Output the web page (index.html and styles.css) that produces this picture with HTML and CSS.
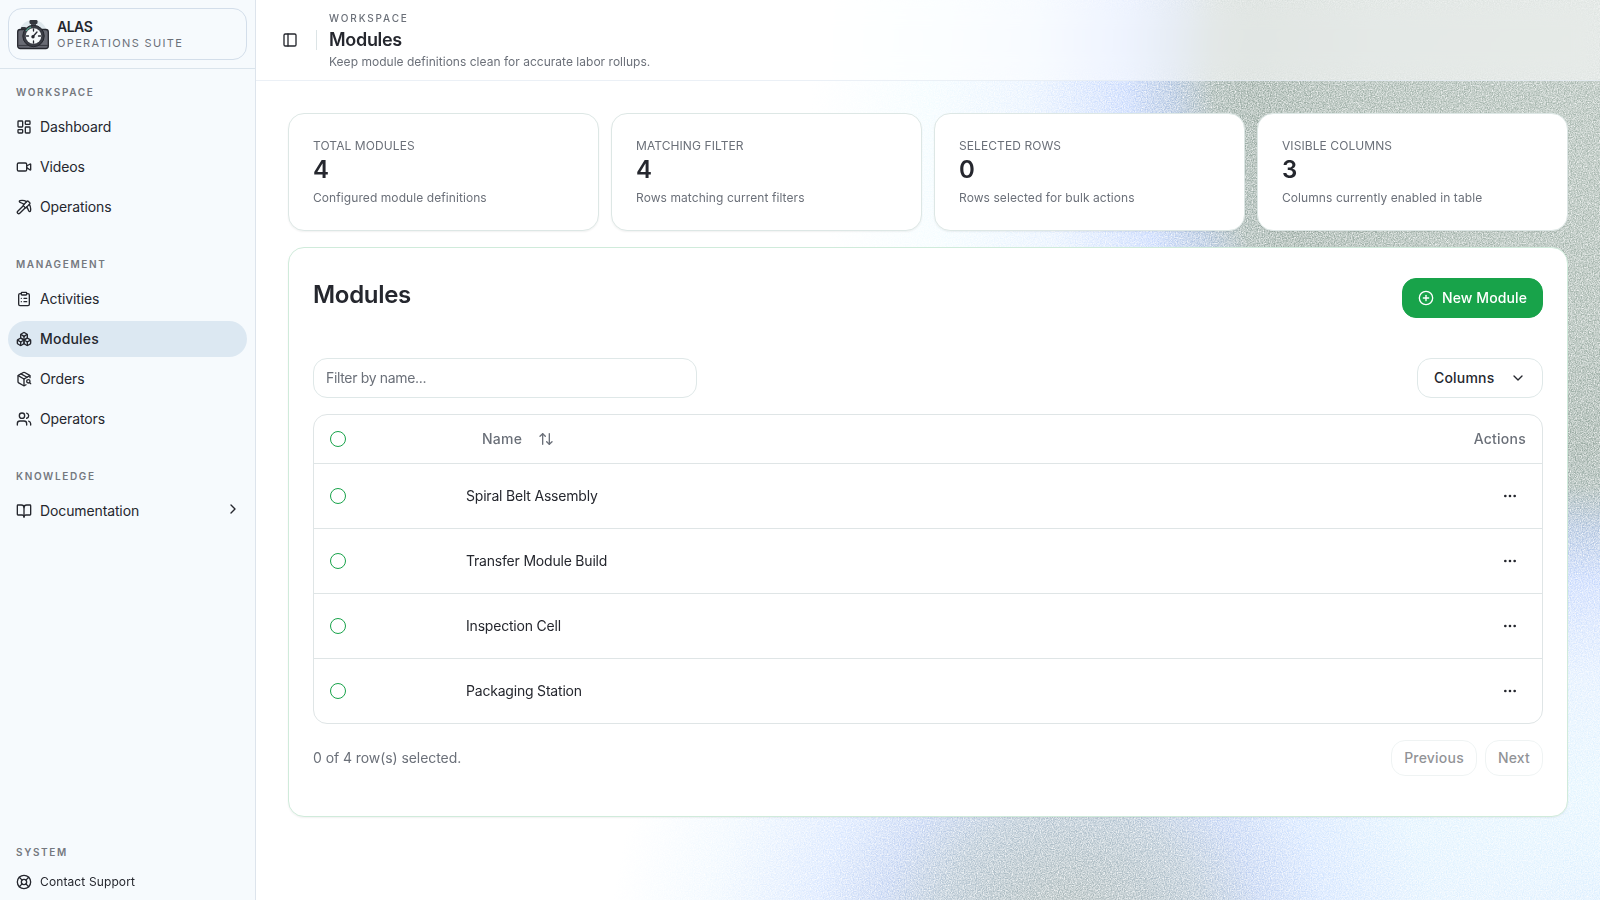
FILE: index.html
```html
<!DOCTYPE html>
<html lang="en">
<head>
    <meta charset="UTF-8">
    <meta name="viewport" content="width=device-width, initial-scale=1.0">
    <title>Modules</title>
    <link rel="stylesheet" href="styles.css">
</head>
<body>
    <div class="backdrop">
        <svg class="grain" width="1344" height="900">
            <filter id="grain" x="0" y="0" width="100%" height="100%" color-interpolation-filters="sRGB">
                <feTurbulence type="fractalNoise" baseFrequency="0.83" numOctaves="3" seed="4"/>
                <feColorMatrix type="matrix" values="0 0 0 0 1  0 0 0 0 1  0 0 0 0 1  1.5 0 0 0 -0.38"/>
            </filter>
            <rect width="1344" height="900" filter="url(#grain)"/>
        </svg>
    </div>

    <div class="app">
        <aside class="sidebar">
            <div class="sidebar-header">
                <div class="brand">
                    <svg class="brand-logo" width="32" height="32" viewBox="0 0 32 32">
                        <circle cx="16" cy="15" r="14" fill="#dfe8ed"/>
                        <rect x="4" y="8" width="5" height="4" rx="1" fill="#34363d"/>
                        <rect x="0.7" y="10.5" width="30.6" height="19" rx="2.5" fill="#696b74" stroke="#25272e" stroke-width="1.3"/>
                        <path d="M1 26.5h30" stroke="#3c3e46" stroke-width="1.2"/>
                        <rect x="14" y="4" width="5" height="4" fill="#4a4c54"/>
                        <rect x="12.5" y="1" width="8" height="4" rx="1.2" fill="#34363d"/>
                        <circle cx="16.5" cy="17" r="10.7" fill="#3a3c44" stroke="#25272e" stroke-width="1"/>
                        <circle cx="16.5" cy="17" r="7.8" fill="#f6f9fa"/>
                        <path d="M9 12a9.3 9.3 0 0 1 5-4" fill="none" stroke="#4fa58d" stroke-width="1.2"/>
                        <path d="M16.5 10v2M16.5 22v2M9.5 17h2M21.5 17h2M16 17.5l4-4.5" stroke="#25272e" stroke-width="1.3" stroke-linecap="round"/>
                        <circle cx="16" cy="17.7" r="1.7" fill="#25272e"/>
                    </svg>
                    <div>
                        <div class="brand-name">ALAS</div>
                        <div class="brand-sub">OPERATIONS SUITE</div>
                    </div>
                </div>
            </div>

            <nav class="nav">
                <div class="nav-group">
                    <div class="nav-label">WORKSPACE</div>
                    <a class="nav-item">
                        <svg class="icon" viewBox="0 0 24 24"><rect width="7" height="9" x="3" y="3" rx="1"/><rect width="7" height="5" x="14" y="3" rx="1"/><rect width="7" height="9" x="14" y="12" rx="1"/><rect width="7" height="5" x="3" y="16" rx="1"/></svg>
                        <span>Dashboard</span>
                    </a>
                    <a class="nav-item">
                        <svg class="icon" viewBox="0 0 24 24"><path d="m16 13 5.223 3.482a.5.5 0 0 0 .777-.416V7.87a.5.5 0 0 0-.752-.432L16 10.5"/><rect x="2" y="6" width="14" height="12" rx="2"/></svg>
                        <span>Videos</span>
                    </a>
                    <a class="nav-item">
                        <svg class="icon" viewBox="0 0 24 24"><path d="m14 13-8.381 8.38a1 1 0 0 1-3.001-3L11 9.999"/><path d="M15.973 4.027A13 13 0 0 0 5.902 2.373c-1.398.342-1.092 2.158.277 2.601a19.9 19.9 0 0 1 5.822 3.024"/><path d="M16.001 11.999a19.9 19.9 0 0 1 3.024 5.824c.444 1.369 2.26 1.676 2.603.278A13 13 0 0 0 20 8.069"/><path d="M18.352 3.352a1.205 1.205 0 0 0-1.704 0l-5.296 5.296a1.205 1.205 0 0 0 0 1.704l2.296 2.296a1.205 1.205 0 0 0 1.704 0l5.296-5.296a1.205 1.205 0 0 0 0-1.704z"/></svg>
                        <span>Operations</span>
                    </a>
                </div>

                <div class="nav-group">
                    <div class="nav-label">MANAGEMENT</div>
                    <a class="nav-item">
                        <svg class="icon" viewBox="0 0 24 24"><rect width="8" height="4" x="8" y="2" rx="1" ry="1"/><path d="M16 4h2a2 2 0 0 1 2 2v14a2 2 0 0 1-2 2H6a2 2 0 0 1-2-2V6a2 2 0 0 1 2-2h2"/><path d="M12 11h4"/><path d="M12 16h4"/><path d="M8 11h.01"/><path d="M8 16h.01"/></svg>
                        <span>Activities</span>
                    </a>
                    <a class="nav-item active">
                        <svg class="icon" viewBox="0 0 24 24"><path d="M2.97 12.92A2 2 0 0 0 2 14.63v3.24a2 2 0 0 0 .97 1.71l3 1.8a2 2 0 0 0 2.06 0L12 19v-5.5l-5-3-4.03 2.42Z"/><path d="m7 16.5-4.74-2.85"/><path d="m7 16.5 5-3"/><path d="M7 16.5v5.17"/><path d="M12 13.5V19l3.97 2.38a2 2 0 0 0 2.06 0l3-1.8a2 2 0 0 0 .97-1.71v-3.24a2 2 0 0 0-.97-1.71L17 10.5l-5 3Z"/><path d="m17 16.5-5-3"/><path d="m17 16.5 4.74-2.85"/><path d="M17 16.5v5.17"/><path d="M7.97 4.42A2 2 0 0 0 7 6.13v4.37l5 3 5-3V6.13a2 2 0 0 0-.97-1.71l-3-1.8a2 2 0 0 0-2.06 0l-3 1.8Z"/><path d="M12 8 7.26 5.15"/><path d="m12 8 4.74-2.85"/><path d="M12 13.5V8"/></svg>
                        <span>Modules</span>
                    </a>
                    <a class="nav-item">
                        <svg class="icon" viewBox="0 0 24 24"><path d="M21 10V8a2 2 0 0 0-1-1.73l-7-4a2 2 0 0 0-2 0l-7 4A2 2 0 0 0 3 8v8a2 2 0 0 0 1 1.73l7 4a2 2 0 0 0 2 0l2-1.14"/><path d="m7.5 4.27 9 5.15"/><path d="M3.29 7 12 12l8.71-5"/><path d="M12 22V12"/><circle cx="18.5" cy="15.5" r="2.5"/><path d="M20.27 17.27 22 19"/></svg>
                        <span>Orders</span>
                    </a>
                    <a class="nav-item">
                        <svg class="icon" viewBox="0 0 24 24"><path d="M16 21v-2a4 4 0 0 0-4-4H6a4 4 0 0 0-4 4v2"/><circle cx="9" cy="7" r="4"/><path d="M22 21v-2a4 4 0 0 0-3-3.87"/><path d="M16 3.13a4 4 0 0 1 0 7.75"/></svg>
                        <span>Operators</span>
                    </a>
                </div>

                <div class="nav-group">
                    <div class="nav-label">KNOWLEDGE</div>
                    <a class="nav-item">
                        <svg class="icon" viewBox="0 0 24 24"><path d="M12 7v14"/><path d="M3 18a1 1 0 0 1-1-1V4a1 1 0 0 1 1-1h5a4 4 0 0 1 4 4 4 4 0 0 1 4-4h5a1 1 0 0 1 1 1v13a1 1 0 0 1-1 1h-6a3 3 0 0 0-3 3 3 3 0 0 0-3-3z"/></svg>
                        <span>Documentation</span>
                        <svg class="icon nav-chevron" viewBox="0 0 24 24"><path d="m9 18 6-6-6-6"/></svg>
                    </a>
                </div>

                <div class="nav-group nav-system">
                    <div class="nav-label">SYSTEM</div>
                    <a class="nav-item small">
                        <svg class="icon" viewBox="0 0 24 24"><circle cx="12" cy="12" r="10"/><path d="m4.93 4.93 4.24 4.24"/><path d="m14.83 9.17 4.24-4.24"/><path d="m14.83 14.83 4.24 4.24"/><path d="m9.17 14.83-4.24 4.24"/><circle cx="12" cy="12" r="4"/></svg>
                        <span>Contact Support</span>
                    </a>
                </div>
            </nav>
        </aside>

        <main class="main">
            <header class="topbar">
                <button class="toggle">
                    <svg class="icon" viewBox="0 0 24 24"><rect width="18" height="18" x="3" y="3" rx="2"/><path d="M9 3v18"/></svg>
                </button>
                <div class="separator"></div>
                <div>
                    <div class="crumb">WORKSPACE</div>
                    <h1 class="page-title">Modules</h1>
                    <div class="page-desc">Keep module definitions clean for accurate labor rollups.</div>
                </div>
            </header>

            <div class="content">
                <section class="stats">
                    <div class="stat">
                        <div class="stat-label">TOTAL MODULES</div>
                        <div class="stat-value">4</div>
                        <div class="stat-desc">Configured module definitions</div>
                    </div>
                    <div class="stat">
                        <div class="stat-label">MATCHING FILTER</div>
                        <div class="stat-value">4</div>
                        <div class="stat-desc">Rows matching current filters</div>
                    </div>
                    <div class="stat">
                        <div class="stat-label">SELECTED ROWS</div>
                        <div class="stat-value">0</div>
                        <div class="stat-desc">Rows selected for bulk actions</div>
                    </div>
                    <div class="stat">
                        <div class="stat-label">VISIBLE COLUMNS</div>
                        <div class="stat-value">3</div>
                        <div class="stat-desc">Columns currently enabled in table</div>
                    </div>
                </section>

                <section class="panel">
                    <div class="panel-header">
                        <h2 class="panel-title">Modules</h2>
                        <button class="btn btn-primary">
                            <svg class="icon" viewBox="0 0 24 24"><circle cx="12" cy="12" r="10"/><path d="M8 12h8"/><path d="M12 8v8"/></svg>
                            <span>New Module</span>
                        </button>
                    </div>

                    <div class="toolbar">
                        <input class="filter" type="text" placeholder="Filter by name...">
                        <button class="btn btn-columns">
                            <span>Columns</span>
                            <svg class="icon" viewBox="0 0 24 24"><path d="m6 9 6 6 6-6"/></svg>
                        </button>
                    </div>

                    <div class="table">
                        <div class="row head">
                            <div><span class="check"></span></div>
                            <div class="sort">
                                <span>Name</span>
                                <svg class="icon" viewBox="0 0 24 24"><path d="m21 16-4 4-4-4"/><path d="M17 20V4"/><path d="m3 8 4-4 4 4"/><path d="M7 4v16"/></svg>
                            </div>
                            <div class="actions">Actions</div>
                        </div>
                        <div class="row">
                            <div><span class="check"></span></div>
                            <div>Spiral Belt Assembly</div>
                            <div class="more"><svg class="icon" viewBox="0 0 24 24"><circle cx="12" cy="12" r="1"/><circle cx="19" cy="12" r="1"/><circle cx="5" cy="12" r="1"/></svg></div>
                        </div>
                        <div class="row">
                            <div><span class="check"></span></div>
                            <div>Transfer Module Build</div>
                            <div class="more"><svg class="icon" viewBox="0 0 24 24"><circle cx="12" cy="12" r="1"/><circle cx="19" cy="12" r="1"/><circle cx="5" cy="12" r="1"/></svg></div>
                        </div>
                        <div class="row">
                            <div><span class="check"></span></div>
                            <div>Inspection Cell</div>
                            <div class="more"><svg class="icon" viewBox="0 0 24 24"><circle cx="12" cy="12" r="1"/><circle cx="19" cy="12" r="1"/><circle cx="5" cy="12" r="1"/></svg></div>
                        </div>
                        <div class="row">
                            <div><span class="check"></span></div>
                            <div>Packaging Station</div>
                            <div class="more"><svg class="icon" viewBox="0 0 24 24"><circle cx="12" cy="12" r="1"/><circle cx="19" cy="12" r="1"/><circle cx="5" cy="12" r="1"/></svg></div>
                        </div>
                    </div>

                    <div class="pager">
                        <div class="pager-info">0 of 4 row(s) selected.</div>
                        <button class="btn btn-page" disabled>Previous</button>
                        <button class="btn btn-page" disabled>Next</button>
                    </div>
                </section>
            </div>
        </main>
    </div>
</body>
</html>
```

FILE: styles.css
```css
* {
    box-sizing: border-box;
}

body {
    margin: 0;
    height: 100vh;
    overflow: hidden;
    font-family: Inter, "Liberation Sans", sans-serif;
    font-size: 14px;
    line-height: 20px;
    color: #25272e;
    background: #ffffff;
}

h1, h2 {
    margin: 0;
}

button, input {
    font-family: inherit;
}

.icon {
    width: 16px;
    height: 16px;
    flex-shrink: 0;
    fill: none;
    stroke: currentColor;
    stroke-width: 2;
    stroke-linecap: round;
    stroke-linejoin: round;
}

/* Grainy coloured background behind everything */
.backdrop {
    position: fixed;
    top: 0;
    right: 0;
    bottom: 0;
    left: 256px;
    background:
        radial-gradient(ellipse 460px 430px at 815px 940px, #a8b4b0 0%, #abbbc3 20%, #b2c3d1 30%, rgba(182, 202, 240, 0.85) 42%, rgba(190, 214, 255, 0.6) 56%, rgba(210, 234, 255, 0.35) 78%, rgba(255, 255, 255, 0) 100%),
        radial-gradient(ellipse 790px 850px at 1344px 70px, #a9b8b0 0%, #a3b3ab 30%, #98a9a1 44%, #9fb0ab 49%, rgba(166, 188, 218, 0.95) 54%, rgba(178, 202, 252, 0.75) 60%, rgba(200, 224, 255, 0.45) 72%, rgba(215, 245, 255, 0.3) 85%, rgba(255, 255, 255, 0) 100%),
        radial-gradient(ellipse 500px 300px at 1344px 900px, #dceeff 0%, #ecf7ff 50%, #ffffff 100%);
}

.grain {
    display: block;
    opacity: 0.95;
}

.app {
    position: relative;
    display: flex;
    height: 100vh;
}

/* Sidebar */
.sidebar {
    width: 256px;
    flex-shrink: 0;
    display: flex;
    flex-direction: column;
    background: #f6fafd;
    border-right: 1px solid #dde4ec;
}

.sidebar-header {
    padding: 8px;
    border-bottom: 1px solid #dae4ec;
}

.brand {
    height: 52px;
    padding: 1px 8px 0;
    display: flex;
    align-items: center;
    gap: 8px;
    border: 1px solid #d3deea;
    border-radius: 14px;
}

.brand-name {
    font-weight: 600;
    line-height: 16px;
    letter-spacing: -0.5px;
}

.brand-sub {
    font-size: 11px;
    line-height: 16px;
    letter-spacing: 1.35px;
    color: #6b7079;
}

.nav {
    flex: 1;
    display: flex;
    flex-direction: column;
    gap: 8px;
}

.nav-group {
    padding: 8px;
    display: flex;
    flex-direction: column;
    gap: 4px;
}

.nav-label {
    height: 32px;
    margin-bottom: -4px;
    padding: 0 8px;
    font-size: 10px;
    font-weight: 600;
    line-height: 31px;
    letter-spacing: 1.65px;
    color: #74787f;
}

.nav-item {
    height: 36px;
    padding: 0 8px;
    display: flex;
    align-items: center;
    gap: 8px;
    border-radius: 18px;
    letter-spacing: -0.12px;
}

.nav-item.active {
    font-weight: 500;
    letter-spacing: 0.2px;
    background: #dce8f2;
}

.nav-chevron {
    margin: -4px -2px 0 auto;
}

.nav-system {
    margin-top: auto;
    padding-bottom: 4px;
}

.nav-system .nav-label {
    line-height: 33px;
}

.nav-item.small {
    height: 28px;
    font-size: 12px;
    letter-spacing: 0.12px;
}

/* Top bar */
.main {
    flex: 1;
    min-width: 0;
}

.topbar {
    height: 81px;
    padding: 0 20px;
    display: flex;
    align-items: center;
    background: rgba(255, 255, 255, 0.55);
    backdrop-filter: blur(12px);
    border-bottom: 1px solid rgba(226, 234, 242, 0.7);
}

.toggle {
    width: 28px;
    height: 28px;
    padding: 6px;
    border: 0;
    color: inherit;
    background: none;
}

.separator {
    width: 1px;
    height: 20px;
    margin: 0 12px;
    background: #dce4e6;
}

.crumb {
    font-size: 10px;
    font-weight: 500;
    line-height: 15px;
    letter-spacing: 1.85px;
    color: #6b7079;
}

.page-title {
    font-size: 18px;
    font-weight: 600;
    line-height: 28px;
    letter-spacing: -0.3px;
}

.page-desc {
    font-size: 12px;
    line-height: 16px;
    letter-spacing: 0.02px;
    color: #6b7079;
}

/* Stat cards */
.content {
    padding: 32px;
}

.stats {
    display: grid;
    grid-template-columns: repeat(4, 1fr);
    gap: 12px;
    margin-bottom: 16px;
}

.stat {
    height: 118px;
    padding: 24px;
    background: #ffffff;
    border: 1px solid #dde7e5;
    border-radius: 16px;
    box-shadow: 0 1px 2px rgba(0, 0, 0, 0.06);
}

.stat-label, .stat-desc {
    font-size: 12px;
    line-height: 16px;
    letter-spacing: 0.08px;
    color: #6b7079;
}

.stat-value {
    margin-bottom: 4px;
    font-size: 24px;
    font-weight: 600;
    line-height: 32px;
}

/* Modules panel */
.panel {
    height: 570px;
    padding: 30px 24px 0;
    background: #ffffff;
    border: 1px solid #d0ebdb;
    border-radius: 16px;
    box-shadow: 0 1px 2px rgba(0, 0, 0, 0.06);
}

.panel-header {
    display: flex;
    justify-content: space-between;
    margin-bottom: 40px;
}

.panel-title {
    font-size: 24px;
    font-weight: 600;
    line-height: 34px;
    letter-spacing: -0.3px;
}

.btn {
    height: 40px;
    padding: 0 16px 1px;
    display: flex;
    align-items: center;
    justify-content: center;
    border: 1px solid #dfe8e8;
    border-radius: 14px;
    font-size: 14px;
    font-weight: 500;
    letter-spacing: 0.2px;
    color: #25272e;
    background: #ffffff;
}

.btn-primary {
    width: 141px;
    padding: 0 14px 1px;
    gap: 8px;
    letter-spacing: 0.1px;
    color: #ffffff;
    background: #18a34a;
    border-color: #18a34a;
}

.toolbar {
    display: flex;
    justify-content: space-between;
    margin-bottom: 16px;
}

.filter {
    width: 384px;
    height: 40px;
    padding: 0 12px 1px;
    border: 1px solid #dfe8e8;
    border-radius: 14px;
    font-size: 14px;
    letter-spacing: -0.33px;
    background: #ffffff;
}

.filter::placeholder {
    color: #6b7079;
}

.btn-columns {
    width: 126px;
    justify-content: space-between;
}

.table {
    border: 1px solid #dfe5e6;
    border-radius: 14px;
}

.row {
    height: 65px;
    padding: 0 16px;
    display: grid;
    grid-template-columns: 136px 1fr 100px;
    align-items: center;
    letter-spacing: -0.2px;
    border-bottom: 1px solid #dfe5e6;
}

.row:last-child {
    height: 64px;
    border-bottom: 0;
}

.row.head {
    height: 49px;
    font-weight: 500;
    letter-spacing: 0.25px;
    color: #6b7079;
}

.check {
    display: block;
    width: 16px;
    height: 16px;
    border: 1px solid #18a34a;
    border-radius: 50%;
}

.sort {
    padding-left: 16px;
    display: flex;
    align-items: center;
    gap: 16px;
}

.actions {
    text-align: right;
}

.more {
    height: 16px;
    padding-right: 8px;
    line-height: 16px;
    letter-spacing: 0;
    text-align: right;
}

.more .icon {
    display: inline-block;
    vertical-align: top;
}

.pager {
    margin-top: 16px;
    display: flex;
    align-items: center;
    gap: 8px;
}

.pager-info {
    flex: 1;
    letter-spacing: -0.07px;
    color: #6b7079;
}

.btn-page {
    height: 36px;
    padding: 0 12px 1px;
    opacity: 0.5;
}
```
